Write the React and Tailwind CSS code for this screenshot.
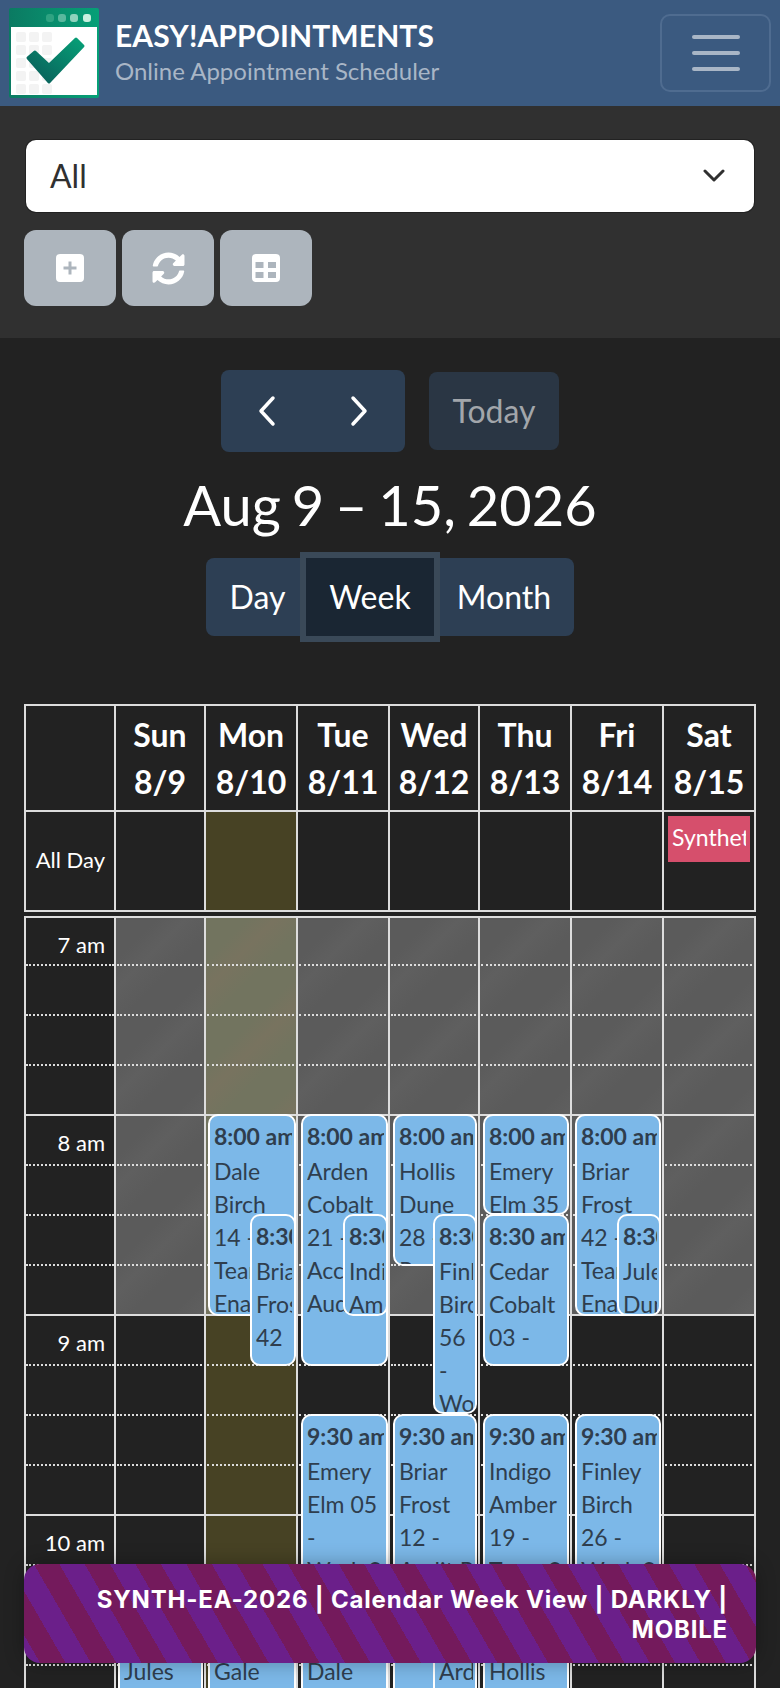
import React from 'react'
import { FaSyncAlt } from 'react-icons/fa'

const columns = 'grid grid-cols-[90px_90px_92px_92px_90px_92px_92px_92px]'

const days = [
    ['Sun', '8/9'], ['Mon', '8/10'], ['Tue', '8/11'], ['Wed', '8/12'],
    ['Thu', '8/13'], ['Fri', '8/14'], ['Sat', '8/15'],
]

const hours = ['7 am', '8 am', '9 am', '10 am']

// tops are measured from the first line of the time grid
const events = [
    { time: '8:00 am', text: 'Dale Birch 14 - Team Enablement', box: 'left-[184px] top-[196px] w-[88px] h-[202px]' },
    { time: '8:30 am', text: 'Briar Frost 42 - Team', box: 'left-[226px] top-[296px] w-[46px] h-[152px]' },
    { time: '8:00 am', text: 'Arden Cobalt 21 - Account Audit', box: 'left-[277px] top-[196px] w-[87px] h-[252px]' },
    { time: '8:30 am', text: 'Indigo Amber', box: 'left-[319px] top-[296px] w-[45px] h-[102px]' },
    { time: '8:00 am', text: 'Hollis Dune 28 - Review', box: 'left-[369px] top-[196px] w-[84px] h-[152px]' },
    { time: '8:30 am', text: 'Finley Birch 56 - Workshop', box: 'left-[409px] top-[296px] w-[44px] h-[200px]' },
    { time: '8:00 am', text: 'Emery Elm 35', box: 'left-[459px] top-[196px] w-[86px] h-[101px]' },
    { time: '8:30 am', text: 'Cedar Cobalt 03 -', box: 'left-[459px] top-[296px] w-[86px] h-[152px]' },
    { time: '8:00 am', text: 'Briar Frost 42 - Team Enablement', box: 'left-[551px] top-[196px] w-[86px] h-[202px]' },
    { time: '8:30 am', text: 'Jules Dune', box: 'left-[593px] top-[296px] w-[44px] h-[102px]' },
    { time: '9:30 am', text: 'Emery Elm 05 - Work\u00a0Session', box: 'left-[277px] top-[496px] w-[87px] h-[202px]' },
    { time: '9:30 am', text: 'Briar Frost 12 - Audit\u00a0Review', box: 'left-[369px] top-[496px] w-[84px] h-[300px]' },
    { time: '9:30 am', text: 'Indigo Amber 19 - Team\u00a0Sync', box: 'left-[459px] top-[496px] w-[86px] h-[202px]' },
    { time: '9:30 am', text: 'Finley Birch 26 - Work\u00a0Session', box: 'left-[551px] top-[496px] w-[86px] h-[202px]' },
    { time: '10:30 am', text: 'Jules Dune 33 - Review', box: 'left-[94px] top-[696px] w-[85px] h-[200px]' },
    { time: '10:30 am', text: 'Gale Frost 40 - Review', box: 'left-[184px] top-[696px] w-[88px] h-[200px]' },
    { time: '10:30 am', text: 'Dale Birch 47 - Review', box: 'left-[277px] top-[696px] w-[87px] h-[200px]' },
    { time: '10:30 am', text: 'Arden Cobalt', box: 'left-[409px] top-[696px] w-[44px] h-[200px]' },
    { time: '10:30 am', text: 'Hollis Dune 54 - Review', box: 'left-[459px] top-[696px] w-[86px] h-[200px]' },
]

const Logo = () => (
    <svg width="90" height="90" viewBox="0 0 90 90" className="shrink-0">
        <defs>
            <linearGradient id="bar" x1="0" y1="0" x2="1" y2="0">
                <stop offset="0" stopColor="#0b7a62" />
                <stop offset="1" stopColor="#06a077" />
            </linearGradient>
            <linearGradient id="tick" x1="0" y1="1" x2="1" y2="0">
                <stop offset="0" stopColor="#0a5a58" />
                <stop offset="1" stopColor="#06a077" />
            </linearGradient>
        </defs>
        <rect x="0" y="0" width="90" height="90" rx="2" fill="url(#bar)" />
        <rect x="2" y="19" width="86" height="68" fill="#ffffff" />
        <g fill="#f3f3f3">
            {[0, 1, 2, 3, 4].map((r) => [0, 1, 2].map((c) => (
                <rect key={r + '-' + c} x={7 + c * 13} y={24 + r * 13} width="10" height="10" rx="2" />
            )))}
        </g>
        <rect x="37" y="6" width="8" height="8" rx="3" fill="#2fa382" />
        <rect x="49" y="6" width="8" height="8" rx="3" fill="#5ab89e" />
        <rect x="61" y="6" width="8" height="8" rx="3" fill="#8fd3bd" />
        <rect x="74" y="6" width="8" height="8" rx="3" fill="#c8f0df" />
        <path d="M19 50 L26 44 L40 57 L67 31 L74 38 L40 74 Z" fill="url(#tick)" stroke="url(#tick)" strokeWidth="3" strokeLinejoin="round" />
    </svg>
)

const Chevron = ({ d }) => (
    <span className="flex w-[92px] justify-center">
        <svg width="20" height="32" viewBox="0 0 20 32" fill="none" stroke="#ffffff" strokeWidth="3.5" strokeLinecap="round" strokeLinejoin="round">
            <path d={d} />
        </svg>
    </span>
)

const App = () => {
    return (
        <div className="relative h-[1688px] w-[780px] overflow-hidden bg-[#222222] font-[Lato,sans-serif] text-white">
            <header className="flex h-[106px] items-center justify-between bg-[#3b5a80] pl-[9px] pr-[9px]">
                <div className="flex items-center">
                    <Logo />
                    <div className="ml-[16px]">
                        <div className="text-[30px] font-bold leading-[36px] tracking-[0.1px]">EASY!APPOINTMENTS</div>
                        <div className="text-[24px] leading-[36px] text-[#a9b6c6]">Online Appointment Scheduler</div>
                    </div>
                </div>
                <button className="flex h-[78px] w-[111px] flex-col items-center justify-center gap-[12px] rounded-[10px] border-2 border-[#4f6c90]">
                    <span className="h-[4px] w-[48px] rounded-full bg-[#a9b6c6]"></span>
                    <span className="h-[4px] w-[48px] rounded-full bg-[#a9b6c6]"></span>
                    <span className="h-[4px] w-[48px] rounded-full bg-[#a9b6c6]"></span>
                </button>
            </header>

            <section className="h-[232px] bg-[#303030] px-[26px] pt-[34px]">
                <div className="flex h-[72px] items-center justify-between rounded-[10px] bg-white pl-[24px] pr-[29px] text-[32px] text-[#303030] ring-1 ring-[#222222]">
                    <span>All</span>
                    <svg width="22" height="14" viewBox="0 0 22 14" fill="none" stroke="#303030" strokeWidth="3" strokeLinecap="round" strokeLinejoin="round">
                        <path d="M2 2 L11 11 L20 2" />
                    </svg>
                </div>
                <div className="-ml-[2px] mt-[18px] flex gap-[6px]">
                    <button className="flex h-[76px] w-[92px] items-center justify-center rounded-[12px] bg-[#adb5bd]">
                        <svg width="28" height="28" viewBox="0 0 28 28">
                            <path fillRule="evenodd" fill="#ffffff" d="M4 0 H24 A4 4 0 0 1 28 4 V24 A4 4 0 0 1 24 28 H4 A4 4 0 0 1 0 24 V4 A4 4 0 0 1 4 0 Z M12.5 7.5 V12.5 H7.5 V15.5 H12.5 V20.5 H15.5 V15.5 H20.5 V12.5 H15.5 V7.5 Z" />
                        </svg>
                    </button>
                    <button className="flex h-[76px] w-[92px] items-center justify-center rounded-[12px] bg-[#adb5bd]"><FaSyncAlt size={33} /></button>
                    <button className="flex h-[76px] w-[92px] items-center justify-center rounded-[12px] bg-[#adb5bd]">
                        <svg width="28" height="28" viewBox="0 0 28 28">
                            <path fillRule="evenodd" fill="#ffffff" d="M4 0 H24 A4 4 0 0 1 28 4 V24 A4 4 0 0 1 24 28 H4 A4 4 0 0 1 0 24 V4 A4 4 0 0 1 4 0 Z M3.5 8 V14 H11.5 V8 Z M16 8 V14 H24 V8 Z M3.5 18 V24 H11.5 V18 Z M16 18 V24 H24 V18 Z" />
                        </svg>
                    </button>
                </div>
            </section>

            <main className="px-[24px] pt-[32px]">
                <div className="flex items-center justify-center gap-[24px]">
                    <div className="flex h-[82px] w-[184px] items-center justify-center rounded-[8px] bg-[#2d3f54]">
                        <Chevron d="M16 3 L4 16 L16 29" />
                        <Chevron d="M4 3 L16 16 L4 29" />
                    </div>
                    <div className="flex h-[78px] w-[130px] items-center justify-center rounded-[8px] bg-[#2a3644] text-[32px] text-[#a2a6ab]">Today</div>
                </div>
                <h2 className="mt-[11px] h-[95px] text-center text-[56px] leading-[84px] [word-spacing:-3.5px]">Aug 9 – 15, 2026</h2>
                <div className="flex justify-center">
                    <div className="flex h-[78px] w-[368px] items-center rounded-[8px] bg-[#2d3f54] text-[32px]">
                        <span className="w-[100px] pl-[3px] text-center">Day</span>
                        <span className="flex h-[78px] w-[128px] items-center justify-center bg-[#1a2633] shadow-[0_0_0_6px_#3a4958]">Week</span>
                        <span className="w-[140px] text-center">Month</span>
                    </div>
                </div>

                <div className="mt-[68px]">
                    <div className={columns + ' border-y-2 border-r-2 border-[#dddddd]'}>
                        <div className="h-[104px] border-l-2 border-[#dddddd]"></div>
                        {days.map(([name, date]) => (
                            <div key={name} className="flex h-[104px] flex-col items-center justify-center border-l-2 border-[#dddddd] text-[32px] font-bold leading-[47px]">
                                <span>{name}</span>
                                <span>{date}</span>
                            </div>
                        ))}
                    </div>
                    <div className={columns + ' border-b-2 border-r-2 border-[#dddddd]'}>
                        <div className="flex h-[98px] items-center justify-end border-l-2 border-[#dddddd] pb-[4px] pr-[9px] text-[22px]">All Day</div>
                        {days.map(([name], i) => (
                            <div key={name} className={'h-[98px] border-l-2 border-[#dddddd] p-[4px_4px_0_4px] ' + (i === 1 ? 'bg-[#474224]' : '')}>
                                {i === 6 && (
                                    <div className="h-[46px] bg-[#d64f6c] px-[4px] text-[23px] leading-[42px]">
                                        <div className="overflow-hidden whitespace-nowrap">Synthetic</div>
                                    </div>
                                )}
                            </div>
                        ))}
                    </div>

                    <div className="mt-[4px] border-x-2 border-t-2 border-[#dddddd]">
                        <div className="relative -mr-[2px] -ml-[2px]">
                            {hours.map((label, h) => (
                                <div key={label} className={columns + ' border-r-2 border-[#dddddd]'}>
                                    <div className="flex flex-col border-l-2 border-[#dddddd]">
                                        {[0, 1, 2, 3].map((s) => (
                                            <div key={s} className={'flex justify-end pr-[9px] pt-[12px] text-[22px] leading-[30px] ' + (s === 3 ? 'border-b-2 border-[#dddddd] ' : 'border-b-2 border-dotted border-[#dddddd] ') + (h === 0 && s === 0 ? 'h-[48px]' : 'h-[50px]')}>
                                                {s === 0 ? label : ''}
                                            </div>
                                        ))}
                                    </div>
                                    {days.map(([name], i) => (
                                        <div key={name} className={'flex flex-col border-l-2 border-[#dddddd] ' + (h < 2 ? (i === 1 ? 'bg-[repeating-linear-gradient(135deg,#72745f_0,#72745f_30px,#78735f_50px,#72745f_75px)]' : 'bg-[repeating-linear-gradient(135deg,#5b5b5b_0,#5b5b5b_30px,#5f5f5f_50px,#5b5b5b_75px)]') : (i === 1 ? 'bg-[#474224]' : ''))}>
                                            {[0, 1, 2, 3].map((s) => (
                                                <div key={s} className={(s === 3 ? 'border-b-2 border-[#dddddd] ' : '') + (h === 0 && s === 0 ? 'h-[48px]' : 'h-[50px]')}>
                                                    {s !== 3 && <div className={'ml-[1px] mr-[2px] border-b-2 border-dotted border-[#dddddd] ' + (h === 0 && s === 0 ? 'h-[48px]' : 'h-[50px]')}></div>}
                                                </div>
                                            ))}
                                        </div>
                                    ))}
                                </div>
                            ))}
                            {events.map((ev, i) => (
                                <div key={i} className={'absolute overflow-hidden rounded-[10px] border-2 border-white bg-[#7cb8e8] pl-[4px] pr-[2px] pt-[4px] text-[23px] leading-[33px] text-[#2f3e4e] ' + ev.box}>
                                    <div className="h-full overflow-hidden">
                                        <div className="mb-[2px] whitespace-nowrap font-bold">{ev.time}</div>
                                        <div>{ev.text}</div>
                                    </div>
                                </div>
                            ))}
                        </div>
                    </div>
                </div>
            </main>

            <div className="absolute left-[24px] top-[1564px] z-10 h-[99px] w-[732px] rounded-[16px] bg-[repeating-linear-gradient(60deg,#6b1f8a_0,#6b1f8a_14px,#741a5c_14px,#741a5c_36px,#6b1f8a_36px,#6b1f8a_44px)] px-[28px] pt-[21px] text-right font-[Inter,sans-serif] text-[24px] font-bold leading-[30px] tracking-[0.8px] shadow-[0_0_20px_rgba(0,0,0,0.3)]">
                SYNTH-EA-2026 | Calendar Week View | DARKLY | MOBILE
            </div>
        </div>
    )
}

export default App
